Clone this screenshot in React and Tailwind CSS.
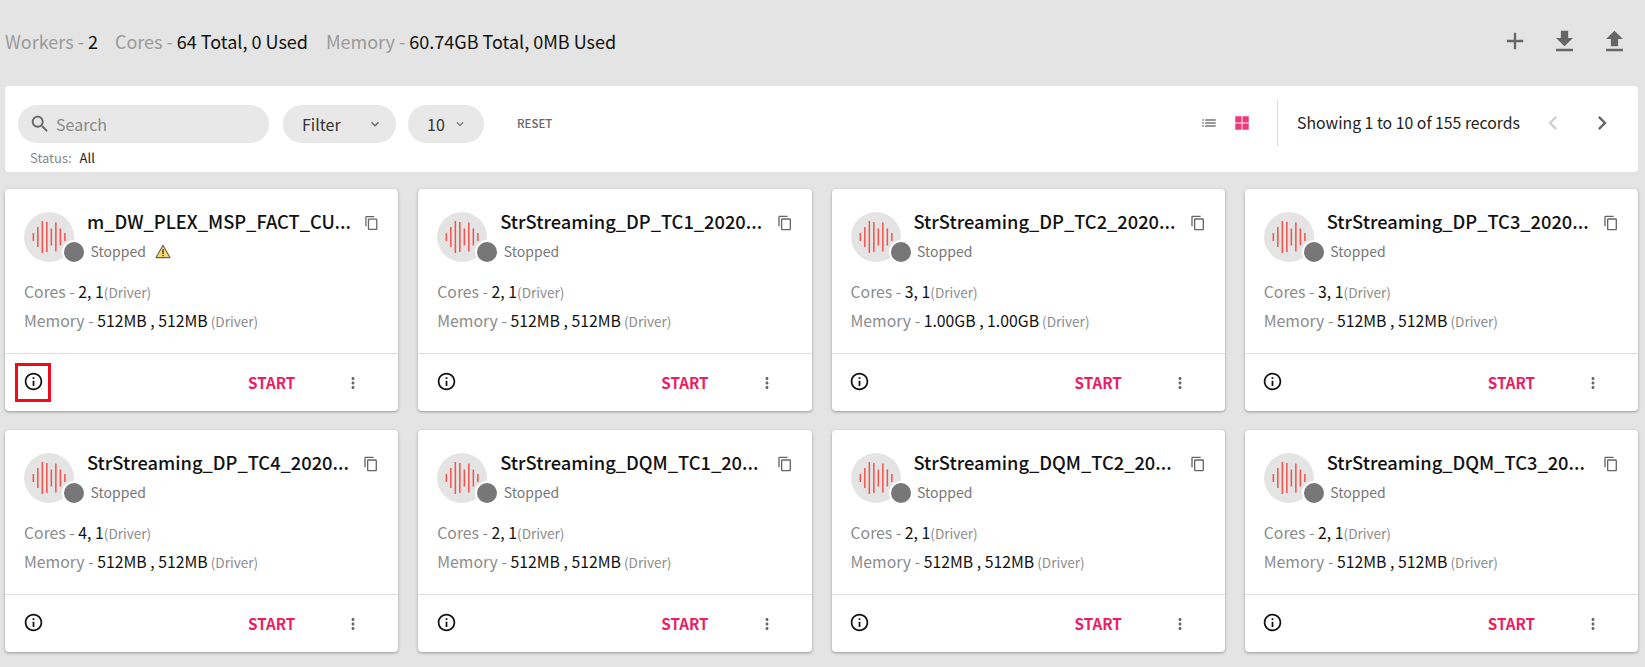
const bars = [[0, 8], [1, 20], [2, 32], [3, 30], [4, 17], [5, 29], [6, 17], [7, 8]];

function Wave() {
  return (
    <svg width="50" height="50" viewBox="0 0 50 50" className="block">
      {bars.map(([i, h]) => (
        <rect key={i} x={8.6 + i * 4.5} y={25 - h / 2} width="1.5" height={h} fill="#f0544c" />
      ))}
    </svg>
  );
}

function Warn() {
  return (
    <svg width="16" height="15" viewBox="0 0 16 15" className="block">
      <path d="M8 1.2 L15 13.6 H1 Z" fill="#f8d775" stroke="#6b6350" strokeWidth="1.1" strokeLinejoin="round" />
      <rect x="7.3" y="5" width="1.4" height="5" fill="#4a4228" />
      <rect x="7.3" y="10.8" width="1.4" height="1.4" fill="#4a4228" />
    </svg>
  );
}

function Icon({ d, size = 24, className = "" }) {
  return (
    <svg width={size} height={size} viewBox="0 0 24 24" fill="currentColor" className={`block ${className}`}>
      <path d={d} />
    </svg>
  );
}

const paths = {
  plus: "M19 13h-6v6h-2v-6H5v-2h6V5h2v6h6v2z",
  download: "M19 9h-4V3H9v6H5l7 7 7-7zM5 18v2h14v-2H5z",
  upload: "M9 16h6v-6h4l-7-7-7 7h4v6zM5 18h14v2H5v-2z",
  copy: "M16 1H4c-1.1 0-2 .9-2 2v14h2V3h12V1zm3 4H8c-1.1 0-2 .9-2 2v14c0 1.1.9 2 2 2h11c1.1 0 2-.9 2-2V7c0-1.1-.9-2-2-2zm0 16H8V7h11v14z",
  info: "M11 7h2v2h-2zm0 4h2v6h-2zm1-9C6.48 2 2 6.48 2 12s4.48 10 10 10 10-4.48 10-10S17.52 2 12 2zm0 18c-4.41 0-8-3.59-8-8s3.59-8 8-8 8 3.59 8 8-3.59 8-8 8z",
  more: "M12 8c1.1 0 2-.9 2-2s-.9-2-2-2-2 .9-2 2 .9 2 2 2zm0 2c-1.1 0-2 .9-2 2s.9 2 2 2 2-.9 2-2-.9-2-2-2zm0 6c-1.1 0-2 .9-2 2s.9 2 2 2 2-.9 2-2-.9-2-2-2z",
  list: "M3 13h2v-2H3v2zm0 4h2v-2H3v2zm0-8h2V7H3v2zm4 4h14v-2H7v2zm0 4h14v-2H7v2zM7 7v2h14V7H7z",
  grid: "M3 3h8.4v8.4H3zM12.6 3H21v8.4h-8.4zM3 12.6h8.4V21H3zM12.6 12.6H21V21h-8.4z",
  left: "M15.41 7.41 14 6l-6 6 6 6 1.41-1.41L10.83 12z",
  right: "M10 6 8.59 7.41 13.17 12l-4.58 4.59L10 18l6-6z",
  chev: "M7.41 8.59 12 13.17l4.59-4.58L18 10l-6 6-6-6z",
  search: "M15.5 14h-.79l-.28-.27C15.41 12.59 16 11.11 16 9.5 16 5.91 13.09 3 9.5 3S3 5.91 3 9.5 5.91 16 9.5 16c1.61 0 3.09-.59 4.23-1.57l.27.28v.79l5 4.99L20.49 19l-4.99-5zm-6 0C7.01 14 5 11.99 5 9.5S7.01 5 9.5 5 14 7.01 14 9.5 11.99 14 9.5 14z",
};

const cards = [
  { name: "m_DW_PLEX_MSP_FACT_CU...", warn: true, cores: "2, 1", mem: "512MB , 512MB", boxed: true },
  { name: "StrStreaming_DP_TC1_2020...", cores: "2, 1", mem: "512MB , 512MB" },
  { name: "StrStreaming_DP_TC2_2020...", cores: "3, 1", mem: "1.00GB , 1.00GB" },
  { name: "StrStreaming_DP_TC3_2020...", cores: "3, 1", mem: "512MB , 512MB" },
  { name: "StrStreaming_DP_TC4_2020...", cores: "4, 1", mem: "512MB , 512MB" },
  { name: "StrStreaming_DQM_TC1_20...", cores: "2, 1", mem: "512MB , 512MB" },
  { name: "StrStreaming_DQM_TC2_20...", cores: "2, 1", mem: "512MB , 512MB" },
  { name: "StrStreaming_DQM_TC3_20...", cores: "2, 1", mem: "512MB , 512MB" },
];

function Stat({ label, value, className = "" }) {
  return (
    <span className={className}>
      <span className="text-[#9a9a9a]">{label} - </span>
      <span className="text-[#111]">{value}</span>
    </span>
  );
}

function Card({ c }) {
  return (
    <div className="h-[222px] flex flex-col bg-white rounded-[4px] shadow-[0_1px_3px_rgba(0,0,0,0.35)]">
      <div className="h-[165px] px-[19px] pt-[23px] border-b border-[#dcdcdc]">
        <div className="flex">
          <div className="relative w-[50px] h-[50px] rounded-full bg-[#e4e4e4] shrink-0">
            <Wave />
            <div className="absolute left-[38px] top-[28px] w-[24px] h-[24px] rounded-full bg-[#777] border-2 border-white" />
          </div>
          <div className="ml-[13px] w-[264px]">
            <div className="text-[18.3px] leading-[24px] font-medium text-[#111] whitespace-nowrap -mt-[3px]">{c.name}</div>
            <div className="mt-[8px] flex items-center h-[20px] text-[14px] leading-[20px] text-[#777] pl-[3.5px]">
              <span>Stopped</span>
              {c.warn && <span className="ml-[9px]"><Warn /></span>}
            </div>
          </div>
          <Icon d={paths.copy} size={16} className="ml-[13px] mt-[3px] text-[#666]" />
        </div>
        <div className="mt-[20px] text-[15.8px] leading-[20px] h-[20px] text-[#111]">
          <span className="text-[#8c8c8c]">Cores - </span>{c.cores}
          <span className="text-[13.6px] text-[#8c8c8c]">(Driver)</span>
        </div>
        <div className="mt-[9px] text-[15.8px] leading-[20px] h-[20px] text-[#111]">
          <span className="text-[#8c8c8c]">Memory - </span>{c.mem}
          <span className="text-[13.6px] text-[#8c8c8c]"> (Driver)</span>
        </div>
      </div>
      <div className="flex-1 flex items-center pl-[10px] pr-[36px]">
        <div className={`w-[36px] h-[39px] flex items-center justify-center border-[3px] ${c.boxed ? "border-[#ee0a1f]" : "border-transparent"}`}>
          <Icon d={paths.info} size={21} className="text-[#111] mb-[2px]" />
        </div>
        <div className="ml-auto mr-[1px] mb-[2px] text-[15.2px] leading-[20px] font-bold text-[#ec1d64]">START</div>
        <Icon d={paths.more} size={18} className="ml-[48px] text-[#666]" />
      </div>
    </div>
  );
}

function Pill({ className = "", children }) {
  return <div className={`h-[38px] rounded-full bg-[#e8e8e8] flex items-center ${className}`}>{children}</div>;
}

export default function App() {
  return (
    <div className="min-h-screen bg-[#e4e4e4] pl-[5px] pr-[7px] font-['Noto_Sans_CJK_SC','Noto_Sans',sans-serif]">
      <header className="h-[86px] flex items-center pb-[4px]">
        <div className="text-[18px] leading-[24px]">
          <Stat label="Workers" value="2" />
          <Stat label="Cores" value="64 Total, 0 Used" className="ml-[17px]" />
          <Stat label="Memory" value="60.74GB Total, 0MB Used" className="ml-[18px]" />
        </div>
        <div className="ml-auto flex items-center gap-[21px] pr-[9px] text-[#666]">
          <Icon d={paths.plus} size={28} />
          <Icon d={paths.download} size={29} />
          <Icon d={paths.upload} size={29} />
        </div>
      </header>

      <section className="h-[86px] bg-white rounded-[4px] flex pl-[13px] pr-[22px] pt-[19px]">
        <div>
          <div className="flex items-center">
            <Pill className="w-[251px] pl-[11px]">
              <Icon d={paths.search} size={22} className="text-[#666]" />
              <span className="ml-[5px] text-[16px] text-[#888]">Search</span>
            </Pill>
            <Pill className="w-[113px] ml-[14px] pl-[19px] text-[16px] text-[#333]">
              Filter
              <Icon d={paths.chev} size={16} className="ml-auto mr-[13px] text-[#666]" />
            </Pill>
            <Pill className="w-[76px] ml-[12px] pl-[19px] text-[16px] text-[#333]">
              10
              <Icon d={paths.chev} size={14} className="ml-[8px] text-[#666]" />
            </Pill>
            <div className="ml-[33px] text-[11.5px] font-medium text-[#666]">RESET</div>
          </div>
          <div className="mt-[6px] pl-[12px] text-[13px] leading-[18px]">
            <span className="text-[#888]">Status:</span>
            <span className="ml-[8px] text-[#222]">All</span>
          </div>
        </div>
        <div className="ml-auto h-[47px] -mt-[6px] flex items-center">
          <Icon d={paths.list} size={18} className="text-[#777]" />
          <Icon d={paths.grid} size={18} className="ml-[15px] text-[#f0387a]" />
          <div className="ml-[26px] w-px h-[47px] bg-[#dcdcdc]" />
          <div className="ml-[19px] text-[15.8px] leading-[24px] text-[#222]">Showing 1 to 10 of 155 records</div>
          <Icon d={paths.left} size={28} className="ml-[19px] text-[#cfcfcf]" />
          <Icon d={paths.right} size={28} className="ml-[21px] text-[#666]" />
        </div>
      </section>

      <main className="grid grid-cols-4 gap-x-5 gap-y-[19px] mt-[17px]">
        {cards.map((c) => (
          <Card key={c.name} c={c} />
        ))}
      </main>
    </div>
  );
}
